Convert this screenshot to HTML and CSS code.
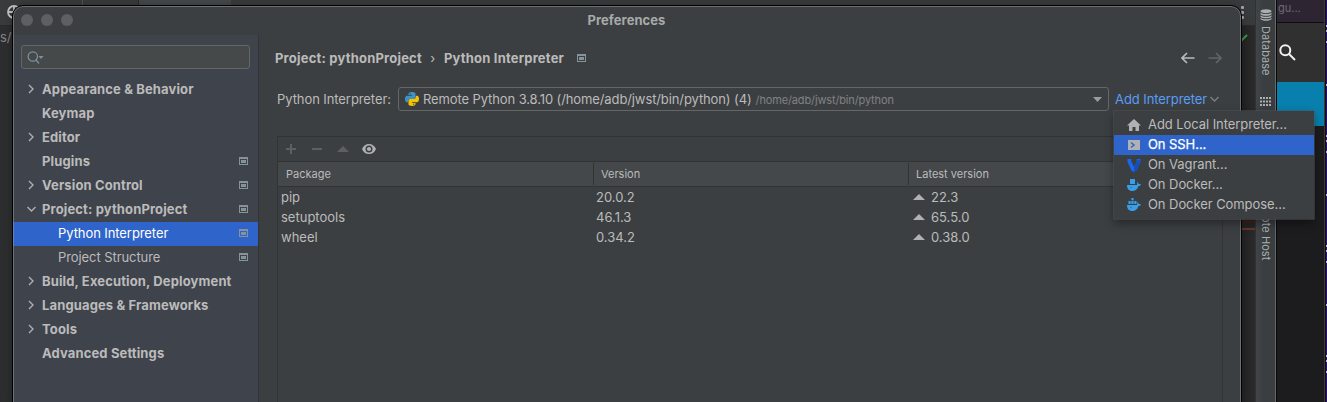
FILE: index.html
```html
<!DOCTYPE html>
<html lang="en">
<head>
<meta charset="utf-8">
<title>Preferences</title>
<link rel="stylesheet" href="styles.css">
</head>
<body>
<svg class="defs" width="0" height="0">
  <symbol id="scope" viewBox="0 0 9 8"><path d="M0 0h9v8H0zM1 2v5h7V2z" fill-rule="evenodd"/><path d="M2 3h5v3H2z"/></symbol>
  <symbol id="right" viewBox="0 0 8 10"><path d="M2 1 6 5 2 9" fill="none" stroke="currentColor" stroke-width="1.4"/></symbol>
  <symbol id="down" viewBox="0 0 9 8"><path d="M.5 2 4.5 6 8.500 2" fill="none" stroke="currentColor" stroke-width="1.4"/></symbol>
  <symbol id="up" viewBox="0 0 12 6"><path d="M0 6 6 0 12 6z"/></symbol>
</svg>

<div class="ide">
  <div class="ide-bar">
    <svg class="globe" width="14" height="14" viewBox="0 0 14 14"><circle cx="7" cy="7" r="6" /><path d="M7 1v12M1 7h12"/></svg>
    <span class="bar-rule"></span><span class="bar-tab"></span>
    <span class="kebab"><i></i><i></i><i></i></span>
  </div>
  <div class="ide-body">
    <span class="path">s/</span>
    <div class="gutter">
      <svg class="check" width="14" height="10" viewBox="0 0 14 10"><path d="M2 4 5 8 12 1"/></svg>
      <div class="marks"></div>
    </div>
  </div>
  <div class="strip">
    <svg width="12" height="12" viewBox="0 0 12 12"><ellipse cx="6" cy="2.200" rx="5.500" ry="2"/><path d="M.5 3.500c1.500 2 9.500 2 11 0v1.700c-1.500 2-9.500 2-11 0zM.5 6.200c1.500 2 9.500 2 11 0v1.600c-1.500 2-9.500 2-11 0zM.5 8.800c1.500 2 9.500 2 11 0v1.200c-1.500 2.400-9.500 2.400-11 0z"/></svg>
    <span class="vertical database">Database</span>
    <svg class="grid-icon" width="11" height="9" viewBox="0 0 11 9"><path d="M0 0h2v2H0zM3 0h2v2H3zM6 0h2v2H6zM9 0h2v2H9zM0 3.500h2v2H0zM3 3.500h2v2H3zM6 3.500h2v2H6zM9 3.500h2v2H9zM0 7h2v2H0zM3 7h2v2H3zM6 7h2v2H6zM9 7h2v2H9z"/></svg>
    <span class="vertical remote">Remote Host</span>
  </div>
</div>

<div class="browser">
  <div class="browser-tab">gu...</div>
  <div class="browser-search"><svg width="17" height="17" viewBox="0 0 17 17"><circle cx="6.300" cy="6.300" r="5"/><path d="m10 10 6 6"/></svg></div>
  <div class="browser-blue"></div>
</div>
<div class="edge"></div>

<div class="window">
  <header class="titlebar">
    <div class="lights"><i></i><i></i><i></i></div>
    <h1><span>Preferences</span></h1>
  </header>
  <div class="content">
    <aside class="sidebar">
      <div class="search">
        <svg width="18" height="14" viewBox="0 0 18 14"><circle cx="5.800" cy="5.500" r="4.700"/><path d="m9 9 3 3.500"/><path class="solid" d="M11.500 5h5L14 8z"/></svg>
      </div>
      <nav class="tree">
        <div class="row"><svg class="chev"><use href="#right"/></svg><span class="label">Appearance &amp; Behavior</span></div>
        <div class="row"><i class="chev"></i><span class="label">Keymap</span></div>
        <div class="row"><svg class="chev"><use href="#right"/></svg><span class="label">Editor</span></div>
        <div class="row"><i class="chev"></i><span class="label">Plugins</span><svg class="scope"><use href="#scope"/></svg></div>
        <div class="row"><svg class="chev"><use href="#right"/></svg><span class="label">Version Control</span><svg class="scope"><use href="#scope"/></svg></div>
        <div class="row"><svg class="chev open"><use href="#down"/></svg><span class="label">Project: pythonProject</span><svg class="scope"><use href="#scope"/></svg></div>
        <div class="row child selected"><span class="label">Python Interpreter</span><svg class="scope"><use href="#scope"/></svg></div>
        <div class="row child"><span class="label">Project Structure</span><svg class="scope"><use href="#scope"/></svg></div>
        <div class="row"><svg class="chev"><use href="#right"/></svg><span class="label">Build, Execution, Deployment</span></div>
        <div class="row"><svg class="chev"><use href="#right"/></svg><span class="label">Languages &amp; Frameworks</span></div>
        <div class="row"><svg class="chev"><use href="#right"/></svg><span class="label">Tools</span></div>
        <div class="row"><i class="chev"></i><span class="label">Advanced Settings</span></div>
      </nav>
    </aside>
    <main class="main">
      <div class="crumbs">
        <span>Project: pythonProject</span>
        <span class="sep">›</span>
        <span>Python Interpreter</span>
        <svg class="scope"><use href="#scope"/></svg>
        <div class="history">
          <svg width="14" height="12" viewBox="0 0 14 12"><path d="M6 1 1 6l5 5M1 6h12.500"/></svg>
          <svg class="off" width="14" height="12" viewBox="0 0 14 12"><path d="m8 1 5 5-5 5M13 6H.5"/></svg>
        </div>
      </div>
      <div class="picker">
        <span class="picker-label">Python Interpreter:</span>
        <div class="select">
          <svg width="14" height="14" viewBox="0 0 14 14"><path fill="#3e92c4" d="M3.500 3V1.700C3.500.6 5 0 7 0s3.500.6 3.500 1.700v3.500c0 1.100-.8 1.800-1.800 1.800H5.200C4 7 3.200 7.700 3.200 9v1.300H2C.6 10.300 0 8.800 0 7s.8-3.300 2-3.300h5V3z"/><path fill="#f5c400" d="M10.500 11v1.300c0 1.100-1.500 1.700-3.500 1.700s-3.500-.6-3.500-1.700V8.800C3.500 7.700 4.300 7 5.300 7h3.500c1.200 0 2-.7 2-2V3.700H12c1.400 0 2 1.500 2 3.300s-.8 3.300-2 3.300H7v.7z"/><circle cx="5.300" cy="1.800" r=".6" fill="#3c3f41"/><circle cx="8.700" cy="12.200" r=".6" fill="#3c3f41"/></svg>
          <span class="value">Remote Python 3.8.10 (/home/adb/jwst/bin/python) (4)</span>
          <span class="hint">/home/adb/jwst/bin/python</span>
          <svg class="caret" width="9" height="5" viewBox="0 0 9 5"><path d="M0 0h9L4.500 5z"/></svg>
        </div>
        <a class="add">Add Interpreter</a>
        <svg class="add-chev"><use href="#down"/></svg>
      </div>
      <section class="packages">
        <div class="tools">
          <svg width="10" height="10" viewBox="0 0 10 10"><path d="M4 0h2v4h4v2H6v4H4V6H0V4h4z"/></svg>
          <svg width="10" height="10" viewBox="0 0 10 10"><path d="M0 4h10v2H0z"/></svg>
          <svg width="12" height="6"><use href="#up"/></svg>
          <svg class="eye" width="14" height="10" viewBox="0 0 14 10"><path fill-rule="evenodd" d="M7 0c3.300 0 5.800 2 7 5-1.200 3-3.700 5-7 5S1.200 8 0 5c1.200-3 3.700-5 7-5m0 1.500a3.500 3.500 0 1 0 0 7 3.500 3.500 0 0 0 0-7"/><circle cx="7" cy="5" r="2.100"/></svg>
        </div>
        <div class="line head"><span>Package</span><span>Version</span><span>Latest version</span></div>
        <div class="line"><span>pip</span><span>20.0.2</span><span><svg class="up"><use href="#up"/></svg>22.3</span></div>
        <div class="line"><span>setuptools</span><span>46.1.3</span><span><svg class="up"><use href="#up"/></svg>65.5.0</span></div>
        <div class="line"><span>wheel</span><span>0.34.2</span><span><svg class="up"><use href="#up"/></svg>0.38.0</span></div>
      </section>
    </main>
  </div>
</div>

<div class="menu">
  <div class="item"><svg viewBox="0 0 14 14"><path fill="#afb1b3" d="m7 1 7 6.500h-2V13H8.500V9h-3v4H2V7.500H0z"/></svg><span>Add Local Interpreter...</span></div>
  <div class="item active"><svg viewBox="0 0 14 14"><path fill="#afb1b3" d="M1 2h12v10H1z"/><path d="m4 4.500 3 2.500-3 2.500" fill="none" stroke="#2f65ca" stroke-width="1.500"/></svg><span>On SSH...</span></div>
  <div class="item"><svg viewBox="0 0 14 14"><path fill="#1868f2" d="M.5 1h3.700v2L7 9l2.800-6V1h3.700v3L9.500 12.500 7 14l-2.500-1.500L.5 4z"/><path fill="#1150bd" d="m9.800 3 2.200-1 1.500-1v3l-4 8.500L7 14V9z"/></svg><span>On Vagrant...</span></div>
  <div class="item"><svg viewBox="0 0 14 14"><path fill="#389fe8" d="M3 1h5v5H3zM0 7h10c.4-1-.1-2 .4-3 .8.500 1.200 1.200 1.200 2 .8-.2 1.800 0 2.400.5-.5 1-1.300 1.500-2.600 1.500C10.500 11.500 8.300 13 5.300 13 1.800 13 0 10.800 0 7"/><circle cx="4" cy="9.500" r=".7" fill="#25678f"/></svg><span>On Docker...</span></div>
  <div class="item"><svg viewBox="0 0 14 14"><path fill="#389fe8" d="M4.400 0h2.200v2.300H4.400zM1.500 3h2.200v3H1.500zM4.400 3h2.200v3H4.400zM7.300 3h2.200v3H7.300zM0 7h10c.4-1-.1-2 .4-3 .8.500 1.200 1.200 1.200 2 .8-.2 1.800 0 2.400.5-.5 1-1.300 1.500-2.600 1.500C10.500 11.500 8.300 13 5.300 13 1.800 13 0 10.800 0 7"/><circle cx="4" cy="9.500" r=".7" fill="#25678f"/></svg><span>On Docker Compose...</span></div>
</div>
</body>
</html>
```
FILE: styles.css
```css
* { box-sizing: border-box; }
body {
  margin: 0; width: 1327px; height: 402px; overflow: hidden; position: relative;
  background: #1c1c1e; color: #bbb; font: 13px/20px Inter, sans-serif; white-space: nowrap;
}
.defs { position: absolute; }
svg { display: block; flex: none; fill: currentColor; }

/* IDE window at the back */
.ide { position: absolute; left: 0; top: 0; width: 1277px; height: 402px; display: grid;
  grid-template: 26px 1fr / 1fr 21px; background: #2d2e2f; border-right: 1px solid #080808; }
.ide-bar { display: flex; background: #393c3d; border-bottom: 1px solid #2a2b2c; color: #ccc; }
.globe { margin: 5px 0 0 7px; fill: none; stroke: #c5c5c5; stroke-width: 1.8; }
.bar-rule { width: 1px; height: 5px; margin-left: 61px; background: #505354; }
.bar-tab { width: 93px; height: 5px; margin-left: 55px; background: #45494b; border-left: 1px solid #292b2c; }
.kebab { margin: 6px 11px 0 auto; display: grid; gap: 2px; align-content: start; }
.kebab i { width: 3px; height: 3px; background: #aaa; border-radius: 1px; }
.ide-body { display: flex; justify-content: space-between; }
.path { color: #858585; font-size: 13px; padding-top: 1px; }
.gutter { width: 20px; background: linear-gradient(90deg, #202020, #2b2b2b); }
.check { margin: 8px 0 0 0; fill: none; stroke: #3c9649; stroke-width: 2; }
.marks { height: 16px; margin-top: 170px; border-bottom: 2px solid #63392b; background: linear-gradient(#3d2423 9px, #262626 9px); }
.strip { grid-column: 2; grid-row: 1 / 3; background: linear-gradient(90deg, #414547, #393d3f 45%, #3a3e40);
  border-left: 1px solid #303233; border-right: 1px solid #66696a; display: flex; flex-direction: column; align-items: center; padding-top: 9px; color: #aaaeaf; }
.vertical { writing-mode: vertical-rl; font-size: 11px; line-height: 18px; letter-spacing: .05px; }
.database { height: 50px; margin-top: 5px; }
.grid-icon { margin-top: 21px; }
.remote { margin-top: 87px; }

/* browser window on the right */
.browser { position: absolute; left: 1277px; top: 0; width: 48px; height: 402px; background: #1c1c1e; border-right: 1px solid #393939; }
.browser-tab { height: 23px; background: #2d2532; color: #716876; border-bottom: 1px solid #0c0c0d; font-size: 11px; line-height: 17px; padding-left: 1px; }
.browser-search { height: 59px; background: #303031; padding: 21px 0 0 2px; }
.browser-search svg { fill: none; stroke: #f1f1f1; stroke-width: 2; }
.browser-blue { height: 44px; background: #087fad; }
.edge { position: absolute; left: 1325px; top: 0; width: 2px; height: 402px; border-left: 1px solid #111;
  background: repeating-linear-gradient(#25106f 0 25px, #bdbdc3 25px 27px, #25106f 27px 30px, #bdbdc3 30px 32px, #25106f 32px 41px, #bdbdc3 41px 43px, #25106f 43px 84px, #bdbdc3 84px 86px, #25106f 86px 110px); }

/* preferences window */
.window { position: absolute; left: 12px; top: 5px; width: 1230px; height: 410px; display: flex; flex-direction: column;
  border: 1px solid #000; border-radius: 11px; background: #3c3f41; overflow: hidden;
  box-shadow: 0 0 12px rgba(0,0,0,.25); }
.window::after { content: ""; position: absolute; inset: 0; border: 1px solid rgba(150,154,156,.55); border-radius: 10px; pointer-events: none; }
.titlebar { height: 29px; padding-bottom: 2px; flex: none; display: grid; grid-template-columns: 1fr auto 1fr; align-items: center; }
.lights { display: flex; gap: 8px; padding-left: 8px; }
.lights i { width: 12px; height: 12px; border-radius: 50%; background: #5e5f61; }
h1 { margin: 0 1px 0 0; font-size: 13px; line-height: 20px; font-weight: 700; color: #a8a9aa; letter-spacing: .06px; }
.content { display: flex; flex: 1; }
.sidebar { width: 246px; flex: none; background: #3f434c; border-right: 1px solid #323435; padding-top: 10px; }
.search { margin: 0 8px; height: 24px; border: 1px solid #646768; border-radius: 3px; background: #45494a; padding: 5px; width: 229px; }
.search svg { fill: none; stroke: #7d929e; stroke-width: 1.2; }
.search .solid { fill: #7d929e; stroke: none; }
.tree { margin-top: 9px; }
.row { height: 24px; display: flex; align-items: center; padding: 0 10px 2px 14px; font-weight: 700; line-height: 22px; letter-spacing: .13px; }
.chev { width: 8px; height: 10px; margin-right: 7px; color: #adb0b3; }
.chev.open { width: 9px; height: 8px; margin: 0 6px 0 0; }
.label { flex: none; }
.scope { width: 9px; height: 8px; color: #87939a; }
.row .scope { margin-left: auto; }
.child { font-weight: 400; padding-left: 45px; letter-spacing: -.08px; }
.selected { background: #2f65ca; color: #fff; }

.main { flex: 1; padding: 11px 17px 0 16px; display: flex; flex-direction: column; }
.crumbs { display: flex; align-items: center; height: 23px; font-weight: 700; letter-spacing: .2px; }
.sep { width: 22px; text-align: center; font-weight: 400; }
.crumbs .scope { margin-left: 13px; }
.history { margin-left: auto; display: flex; gap: 13px; padding-right: 2px; }
.history svg { fill: none; stroke: #b9bbbc; stroke-width: 1.6; }
.history .off { stroke: #626566; }
.picker { display: flex; align-items: center; margin: 18px 0 0 2px; height: 24px; letter-spacing: -.08px; }
.picker-label { width: 121px; }
.select { width: 711px; height: 24px; border: 1px solid #646768; border-radius: 3px; display: flex; align-items: center; padding: 0 6px; }
.value { margin-left: 4px; letter-spacing: -.11px; }
.hint { font-size: 11px; color: #808284; margin-left: 4px; padding-top: 1px; letter-spacing: -.14px; }
.caret { margin-left: auto; color: #9a9d9f; }
.add { color: #589df6; margin-left: 6px; }
.add-chev { width: 9px; height: 8px; margin-left: 3px; color: #7b7e80; }
.packages { flex: 1; margin: 25px 0 0 2px; border: 1px solid #313335; width: 946px; }
.tools { height: 24px; display: flex; align-items: center; padding-left: 8px; gap: 16px; color: #5d5f60; }
.tools svg:nth-child(3) { margin-left: -1px; }
.eye { color: #afb1b3; margin-left: -3px; }
.line { display: grid; grid-template-columns: 315px 315px 1fr; height: 20px; }
.line > span { display: flex; align-items: center; padding-left: 3px; }
.line > span:nth-child(3) { padding-left: 5px; }
.head { height: 26px; border: solid #313335; border-width: 1px 0; background: #45484a; font-size: 11px; }
.line.head > span { padding-left: 8px; }
.line.head > span + span { padding-left: 7px; border-left: 1px solid #313335; margin: 1px 0; }
.up { width: 12px; height: 6px; margin-right: 6px; color: #afb1b3; }

.menu { position: absolute; left: 1114px; top: 111px; width: 200px; height: 108px; padding-top: 4px; background: #3c3f41; letter-spacing: -.07px; box-shadow: 0 0 0 .5px #515658, 0 4px 9px rgba(0,0,0,.4); }
.item { height: 20px; line-height: 18px; display: flex; align-items: center; padding: 0 0 2px 13px; }
.item svg { width: 14px; height: 14px; margin: 2px 7px 0 0; }
.active { background: #2f65ca; color: #fff; -webkit-text-stroke: .25px; }
```
